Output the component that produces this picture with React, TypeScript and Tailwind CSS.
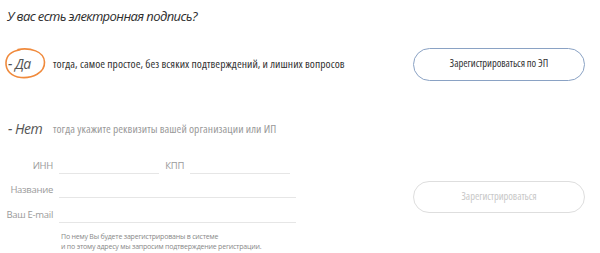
import React from "react";

function Field({ label, labelW, lineW }: { label: string; labelW: string; lineW: string }) {
  return (
    <div className="flex items-end">
      <span className={`${labelW} text-right text-[9.5px] leading-none text-[#9a9a9a] pb-[4px] tracking-[-0.3px] whitespace-nowrap`}>{label}</span>
      <span className={`ml-[6px] ${lineW} border-b border-[#e6e6e6] h-[14px]`} />
    </div>
  );
}

export default function App() {
  return (
    <div className="w-[600px] h-[253px] bg-white relative overflow-hidden" style={{ fontFamily: '"Open Sans", sans-serif' }}>
      <div className="pl-[7px] pt-[6px] text-[13px] italic text-[#2e2e2e] leading-[20px] tracking-[-0.6px]">
        У вас есть электронная подпись?
      </div>

      <div className="flex items-center mt-[21px] h-[34px]">
        <div className="relative w-[53px] h-[34px] flex items-center">
          <svg className="absolute left-[4px] top-0" width="44" height="34" viewBox="0 0 44 34">
            <path
              d="M14 2.5 C26 0.5 40 4 40.5 15 C41 26 28 31.5 17 30.5 C7 29.5 1.5 23 2 15.5 C2.5 8 8 4 16 3"
              fill="none"
              stroke="#f08a3c"
              strokeWidth="1.6"
              strokeLinecap="round"
            />
          </svg>
          <span className="relative pl-[8px] text-[14px] italic text-[#555] tracking-[-0.5px] leading-none">- Да</span>
        </div>
        <span className="text-[11.5px] text-[#333] tracking-[0.06px] leading-none font-stretch-[75%]">
          тогда, самое простое, без всяких подтверждений, и лишних вопросов
        </span>
        <div className="ml-auto mr-[15px] w-[172px] h-[33px] rounded-full border border-[#8aa2c4] flex items-center justify-center text-[10.5px] text-[#333] tracking-[-0.05px] font-stretch-[75%]">
          Зарегистрироваться по ЭП
        </div>
      </div>

      <div className="flex items-center mt-[38px] h-[20px]">
        <span className="w-[53px] pl-[8px] text-[14px] italic text-[#555] tracking-[-0.5px] leading-none">- Нет</span>
        <span className="text-[11.5px] text-[#9a9a9a] tracking-[0.05px] leading-none font-stretch-[75%]">
          тогда укажите реквизиты вашей организации или ИП
        </span>
      </div>

      <div className="flex mt-[21px]">
        <div className="flex flex-col">
          <div className="flex">
            <Field label="ИНН" labelW="w-[53px]" lineW="w-[100px]" />
            <Field label="КПП" labelW="w-[25px]" lineW="w-[100px]" />
          </div>
          <div className="mt-[10px]">
            <Field label="Название" labelW="w-[53px]" lineW="w-[237px]" />
          </div>
          <div className="mt-[11px]">
            <Field label="Ваш E-mail" labelW="w-[53px]" lineW="w-[237px]" />
          </div>
          <div className="pl-[61px] mt-[9px] text-[7px] leading-[9.5px] text-[#888] tracking-[-0.2px]">
            <div>По нему Вы будете зарегистрированы в системе</div>
            <div>и по этому адресу мы запросим подтверждение регистрации.</div>
          </div>
        </div>
        <div className="ml-auto mr-[15px] mt-[21px] w-[172px] h-[32px] rounded-full border border-[#dedede] flex items-center justify-center text-[10.5px] text-[#c8c8c8] tracking-[-0.05px] font-stretch-[75%]">
          Зарегистрироваться
        </div>
      </div>
    </div>
  );
}
